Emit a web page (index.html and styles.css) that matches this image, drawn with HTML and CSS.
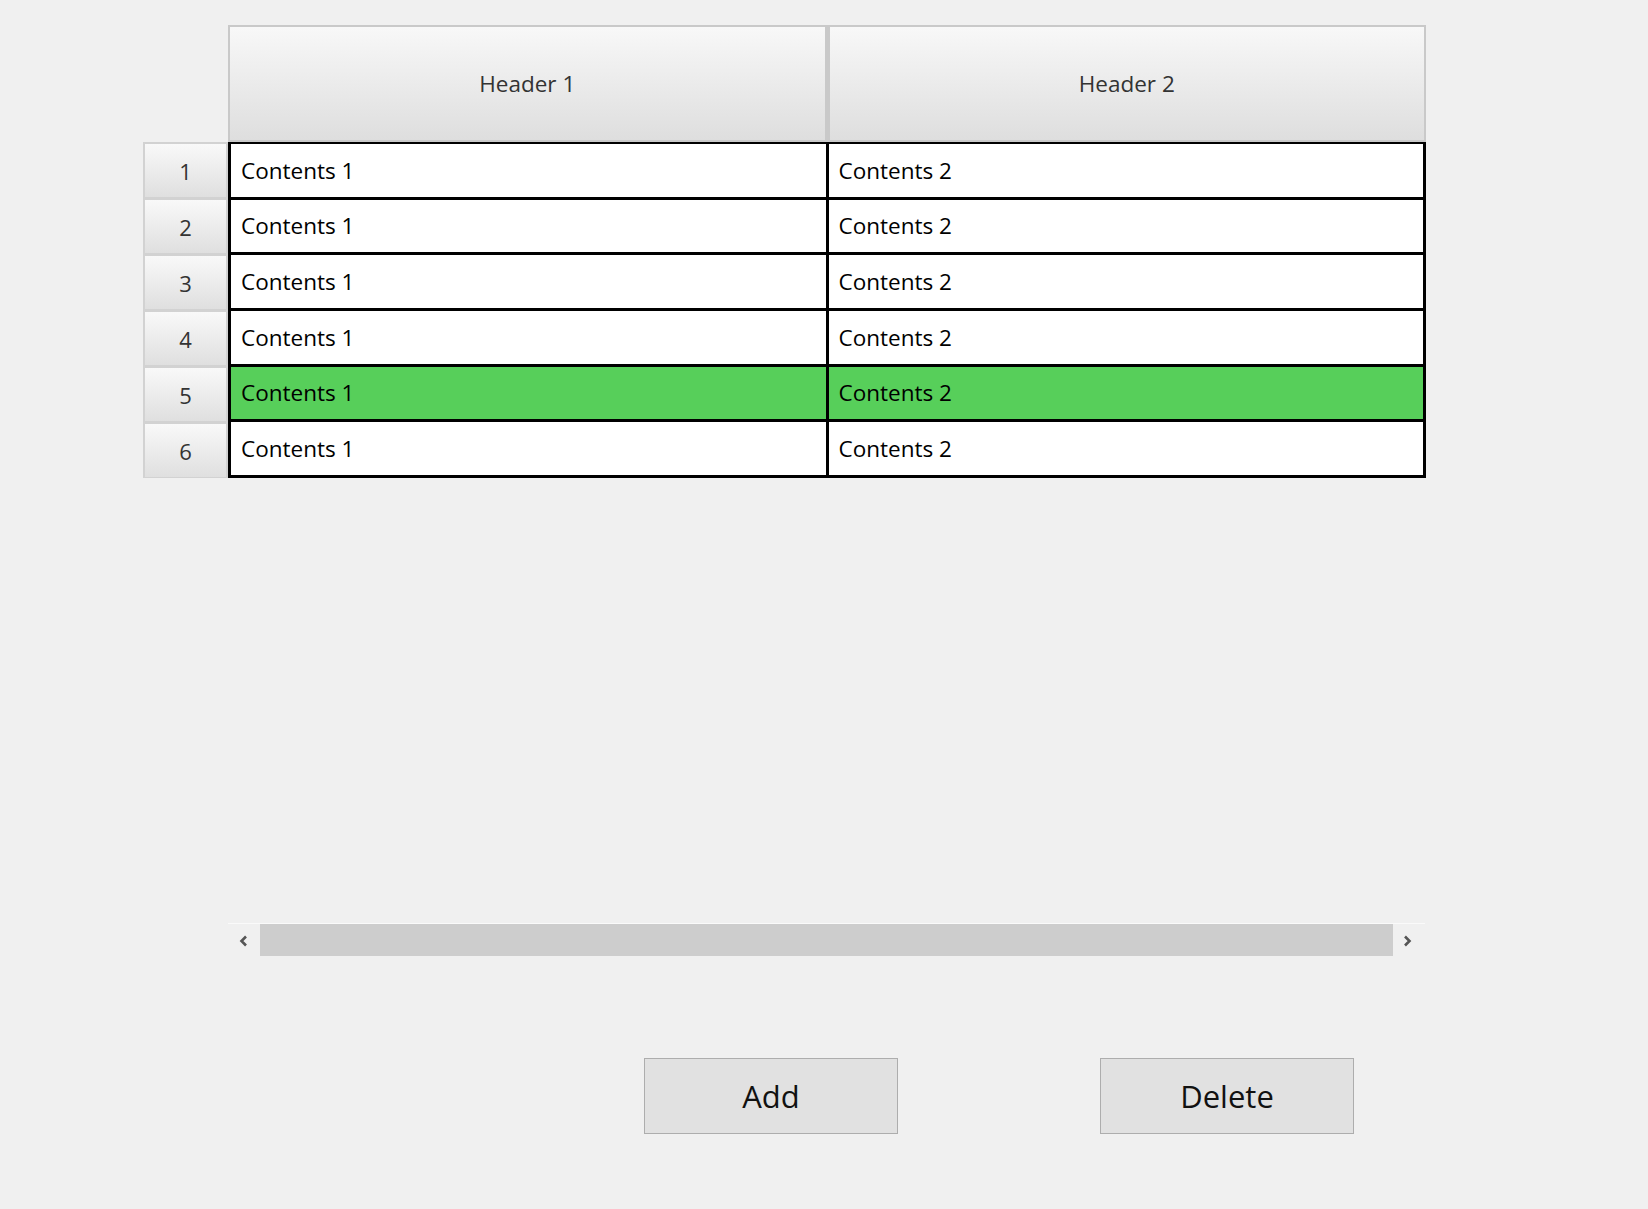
FILE: index.html
```html
<!DOCTYPE html>
<html>
<head>
<meta charset="utf-8">
<link rel="stylesheet" href="styles.css">
</head>
<body>
<div class="page">
  <div class="table">
    <div class="corner"></div>
    <div class="headers">
      <div class="hcell">Header 1</div>
      <div class="hcell">Header 2</div>
    </div>
    <div class="rowheads">
      <div class="rh">1</div>
      <div class="rh">2</div>
      <div class="rh">3</div>
      <div class="rh">4</div>
      <div class="rh">5</div>
      <div class="rh">6</div>
    </div>
    <div class="data">
      <div class="cell">Contents 1</div><div class="cell">Contents 2</div>
      <div class="cell">Contents 1</div><div class="cell">Contents 2</div>
      <div class="cell">Contents 1</div><div class="cell">Contents 2</div>
      <div class="cell">Contents 1</div><div class="cell">Contents 2</div>
      <div class="cell sel">Contents 1</div><div class="cell sel">Contents 2</div>
      <div class="cell">Contents 1</div><div class="cell">Contents 2</div>
    </div>
  </div>

  <div class="hscroll">
    <div class="arrow arrow-left">
      <svg width="12" height="14" viewBox="0 0 12 14"><path d="M8 2.5 L3.5 7 L8 11.5" fill="none" stroke="#555" stroke-width="2.6"/></svg>
    </div>
    <div class="thumb"></div>
    <div class="arrow arrow-right">
      <svg width="12" height="14" viewBox="0 0 12 14"><path d="M4 2.5 L8.5 7 L4 11.5" fill="none" stroke="#555" stroke-width="2.6"/></svg>
    </div>
  </div>

  <div class="buttons">
    <button class="btn">Add</button>
    <button class="btn">Delete</button>
  </div>
</div>
</body>
</html>
```

FILE: styles.css
```css
html, body {
  margin: 0;
  padding: 0;
  background: #f0f0f0;
}
body {
  font-family: "Open Sans", "Noto Sans", "Liberation Sans", sans-serif;
  width: 1648px;
  height: 1209px;
  overflow: hidden;
}
.page {
  padding: 25px 0 0 143px;
}
.table {
  display: grid;
  grid-template-columns: 85px 1198px;
  grid-template-rows: 117px 336px;
}
.headers {
  display: flex;
}
.hcell {
  flex: 1;
  display: flex;
  align-items: center;
  justify-content: center;
  border: 2px solid #c9c9c9;
  background: linear-gradient(#f8f8f8, #dedede);
  color: #333;
  font-size: 22.5px;
  box-sizing: border-box;
}
.hcell + .hcell {
  border-left: 3px solid #c9c9c9;
}
.rowheads {
  display: flex;
  flex-direction: column;
}
.rh {
  height: 56px;
  box-sizing: border-box;
  border: 2px solid #d2d2d2;
  border-bottom-width: 1px;
  border-top-width: 2px;
  background: linear-gradient(#f9f9f9, #dfdfdf);
  display: flex;
  align-items: center;
  justify-content: center;
  color: #333;
  font-size: 22px;
}
.data {
  display: grid;
  grid-template-columns: 1fr 1fr;
  grid-template-rows: repeat(6, 1fr);
  gap: 3px;
  padding: 2px 3px 3px 3px;
  background: #000;
  box-sizing: border-box;
}
.cell {
  background: #fff;
  display: flex;
  align-items: center;
  padding-left: 10px;
  font-size: 22.5px;
  color: #000;
}
.cell.sel {
  background: #57cf5a;
}
.hscroll {
  margin: 445px 0 0 85px;
  width: 1197px;
  height: 34px;
  box-sizing: border-box;
  border-top: 1px solid #fafafa;
  display: flex;
  align-items: stretch;
}
.arrow {
  width: 32px;
  display: flex;
  align-items: center;
  justify-content: center;
}
.arrow-right {
  padding-right: 4px;
  box-sizing: border-box;
}
.thumb {
  flex: 1;
  background: #cdcdcd;
  margin-bottom: 1px;
}
.buttons {
  margin: 101px 0 0 501px;
  display: flex;
  gap: 202px;
}
.btn {
  width: 254px;
  height: 76px;
  background: #e1e1e1;
  border: 1px solid #adadad;
  font-family: "Open Sans", "Noto Sans", "Liberation Sans", sans-serif;
  font-size: 31px;
  color: #111;
  padding: 0;
}
```
